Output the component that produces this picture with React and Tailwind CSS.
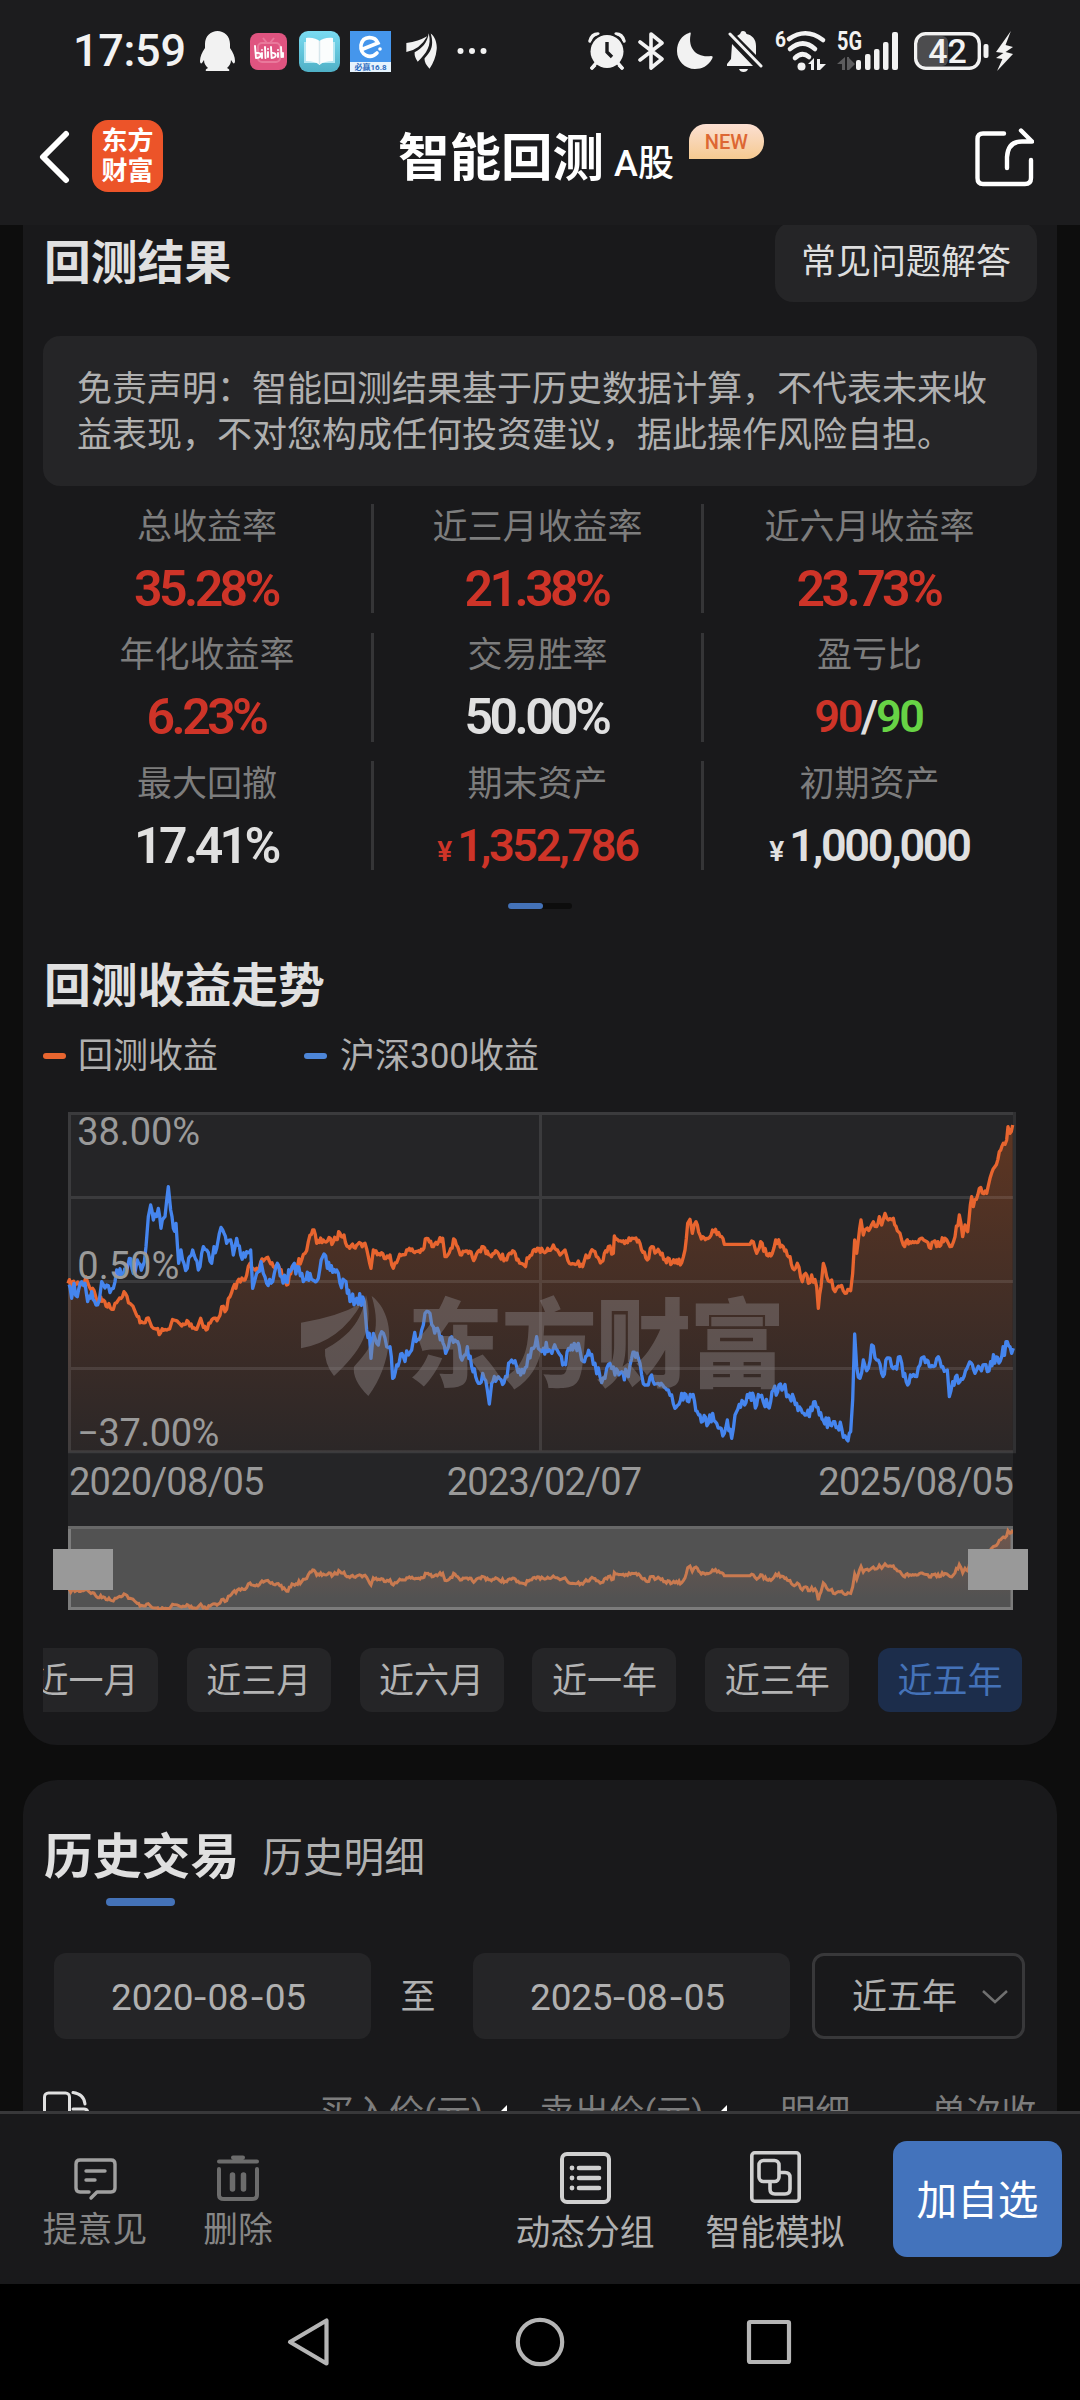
import React from "react";

const STRATEGY = [
  [54,550],[100,550],[108,530],[118,560],[128,565],[140,600],[160,600],[185,628],[195,610],[222,575],[240,610],[262,650],[278,668],[290,655],[305,680],[332,698],[350,690],[372,660],[395,678],[415,665],[440,688],[452,655],[468,690],[485,660],[505,655],[515,620],[525,635],[540,590],[562,545],[585,540],[600,490],[620,505],[640,483],[658,483],[670,500],[685,495],[710,555],[730,500],[755,480],[765,460],[780,405],[792,390],[800,430],[820,420],[850,425],[870,400],[882,405],[895,440],[920,435],[945,430],[955,470],[963,505],[970,450],[990,465],[1020,465],[1030,505],[1045,475],[1070,450],[1090,455],[1118,450],[1130,415],[1150,440],[1178,415],[1185,470],[1215,420],[1235,465],[1255,460],[1275,475],[1300,440],[1320,465],[1345,460],[1370,480],[1388,452],[1400,480],[1422,495],[1445,465],[1475,445],
  [1480,455],[1510,435],[1530,465],[1545,450],[1558,490],[1585,483],[1598,500],[1608,465],[1635,455],[1655,485],[1675,440],[1690,460],[1693,408],[1715,425],[1750,415],[1770,430],[1792,480],[1805,440],[1820,455],[1845,478],[1875,488],[1895,488],[1905,450],[1913,370],[1920,358],[1927,400],[1938,365],[1950,405],[1970,415],[1992,395],[2015,410],[2023,433],[2100,433],[2110,425],[2120,460],[2132,425],[2150,465],[2167,460],[2177,420],[2200,440],[2220,470],[2228,505],[2242,490],[2257,545],[2267,520],[2275,550],[2285,525],[2300,560],[2305,625],[2313,560],[2320,490],[2330,530],[2345,540],[2355,575],[2370,560],[2385,580],[2402,572],[2408,520],[2414,420],[2420,460],[2433,360],[2440,405],[2460,385],[2470,365],[2480,380],[2488,350],[2495,375],[2505,340],[2515,360],[2530,355],[2550,400],[2560,435],[2580,425],[2600,428],[2625,422],[2642,445],[2650,425],[2660,440],[2685,415],[2700,440],[2715,410],[2728,345],[2738,410],[2745,375],[2753,395],[2765,290],[2770,320],[2788,265],[2810,280],[2820,235],[2835,200],[2848,155],[2860,130],[2870,120],[2874,80],[2880,100],[2888,75],
];

const CSI300 = [
  [54,560],[65,595],[72,550],[82,590],[95,545],[105,550],[113,605],[125,575],[138,615],[148,600],[155,545],[170,555],[180,578],[190,565],[200,510],[215,530],[238,475],[250,520],[262,480],[278,500],[288,440],[295,350],[302,315],[310,360],[325,325],[333,385],[345,350],[355,260],[362,330],[370,385],[378,370],[386,490],[393,450],[402,490],[412,505],[428,450],[445,510],[455,460],[470,450],[485,490],[492,440],[500,445],[508,400],[518,390],[530,430],[542,420],[550,465],[560,415],[572,465],[590,455],[602,450],[608,565],[620,520],[633,485],[640,520],[650,550],[668,545],[682,490],[695,530],[708,545],[720,515],[742,500],[760,545],[780,520],[805,535],[822,462],[832,505],[860,510],[870,550],[888,545],[900,605],[920,595],[943,605],[950,690],[958,700],[963,775],[970,700],[985,735],[995,695],[1010,740],[1020,740],[1028,835],[1040,795],[1060,770],[1075,765],[1090,720],[1115,690],[1125,640],[1135,635],[1150,680],[1175,710],[1187,760],[1200,715],[1215,720],[1240,770],[1252,740],[1265,800],[1285,850],[1298,820],[1312,870],[1318,912],[1325,850],[1345,830],[1362,848],[1385,780],[1400,800],[1412,825],[1430,800],[1445,745],[1460,710],[1470,750],
  [1480,745],[1510,745],[1538,795],[1560,750],[1585,730],[1595,780],[1620,765],[1635,790],[1650,830],[1665,835],[1680,790],[1695,825],[1715,815],[1735,830],[1745,775],[1765,775],[1775,825],[1790,855],[1805,825],[1825,850],[1855,870],[1865,885],[1875,925],[1895,880],[1925,890],[1950,945],[1975,970],[1988,940],[2000,970],[2023,1000],[2032,960],[2045,1015],[2055,945],[2080,905],[2100,880],[2120,915],[2130,890],[2145,920],[2162,905],[2170,870],[2200,865],[2215,885],[2240,910],[2278,950],[2295,905],[2308,945],[2340,975],[2350,965],[2375,985],[2390,1018],[2402,995],[2408,900],[2414,702],[2420,800],[2430,835],[2440,780],[2455,805],[2465,735],[2480,780],[2495,820],[2520,775],[2535,800],[2550,770],[2560,830],[2573,855],[2585,830],[2600,830],[2610,795],[2630,780],[2650,800],[2665,770],[2692,810],[2698,890],[2708,845],[2738,838],[2755,795],[2775,820],[2790,805],[2812,815],[2822,785],[2855,770],[2872,725],[2880,740],[2885,760],[2890,745],
];

// Fills the space between two samples with small deterministic daily swings.
function daily(points, amp) {
  const out = [];
  let seed = 7;
  const rnd = () => {
    seed = (seed * 16807) % 2147483647;
    return seed / 2147483647 - 0.5;
  };
  for (let i = 0; i < points.length - 1; i++) {
    const [x0, y0] = points[i];
    const [x1, y1] = points[i + 1];
    out.push([x0, y0]);
    const flat = y0 === y1 && x1 - x0 > 60;
    const n = Math.floor((x1 - x0) / 4);
    for (let k = 1; k < n; k++) {
      const t = k / n;
      out.push([x0 + (x1 - x0) * t, y0 + (y1 - y0) * t + (flat ? 0 : rnd() * amp)]);
    }
  }
  out.push(points[points.length - 1]);
  return out;
}

const line = (pts) => "M" + pts.map((p) => p[0].toFixed(1) + " " + p[1].toFixed(1)).join("L");
const strategyLine = line(daily(STRATEGY, 22));
const indexLine = line(daily(CSI300, 38));
const navPoints = daily(STRATEGY, 28).map(([x, y]) => [(x - 54) / 3, 4 + (y - 75) * 0.1277]);
const navLine = line(navPoints);

const PETALS = [
  "M753 668Q860 652 935 610Q870 725 753 745Z",
  "M825 748C890 712 935 670 948 585C975 690 930 755 852 828Q822 790 825 748Z",
  "M965 588C1008 620 1022 680 1017 725C1011 785 990 840 955 888C922 855 908 825 912 800C962 745 998 700 965 588Z",
];

function StatusBar() {
  return (
    <div className="flex h-[102px] items-center pl-[73px] text-[#f2f2f2]">
      <span className="w-[113px] text-[45px] leading-[60px] font-medium tracking-[-0.300px] whitespace-nowrap">17:59</span>
      <svg className="ml-[14px] h-[40px] w-[35px]" viewBox="0 0 35 40" fill="currentColor">
        <path d="M17.500 0C24 0 30 5 30 13V17C33 21 35 26 35 30C35 32 34 33 33 32L31 29C31 33 29 35 27 37C29 38 30 39 29 40H6C5 39 6 38 8 37C6 35 4 33 4 29L2 32C1 33 0 32 0 30C0 26 2 21 5 17V13C5 5 11 0 17.500 0Z" />
      </svg>
      <svg className="ml-[15px] h-[37px] w-[37px]" viewBox="0 0 37 37">
        <rect width="37" height="37" rx="8" fill="#df5480" />
        <rect x="8" y="10" width="22" height="19" rx="4" fill="none" stroke="#e9799b" strokeWidth="2" />
        <path d="M13 5l4 5M24 5l-4 5" stroke="#e9799b" strokeWidth="2" />
        <g fill="none" stroke="#fff" strokeWidth="1.900" strokeLinecap="round" strokeLinejoin="round">
          <path d="M5 13l1 12c6 0 6-6 1-5M12 20v5M12 17v.1M15 14l.5 11M18 19v5M18 16v.1M21 14l.6 11c6 0 5-6 0-5M28 20v4M28 17v.1M31 14l.5 10M33 20v4" />
        </g>
      </svg>
      <svg className="ml-[12px] h-[41px] w-[41px]" viewBox="0 0 41 41">
        <defs>
          <linearGradient id="book" x1="0" y1="0" x2="0" y2="1">
            <stop offset="0" stopColor="#7adcf2" />
            <stop offset="1" stopColor="#4fb0c6" />
          </linearGradient>
        </defs>
        <rect width="41" height="41" rx="9" fill="url(#book)" />
        <path d="M5 11H36V32H5Z" fill="#b6e8f3" />
        <path d="M7 7C13 6 18 8 20.500 10C23 8 28 6 34 7V30C28 30 24 31 20.500 34C17 31 13 30 7 30Z" fill="#fbfdfd" />
        <path d="M20.500 10V33" stroke="#d7e7ec" strokeWidth="1.500" />
      </svg>
      <svg className="ml-[10px] h-[41px] w-[41px] overflow-visible" viewBox="0 0 41 41">
        <rect width="41" height="41" fill="#4596ec" />
        <rect y="31" width="41" height="10" fill="#e6f3fd" />
        <path d="M13 18L28 12C25 5 13 4 11 14C10 24 20 29 27 22" fill="none" stroke="#fff" strokeWidth="3.600" strokeLinecap="round" />
        <circle cx="30" cy="18" r="1.800" fill="#fff" />
        <text x="20.500" y="39" textAnchor="middle" fontSize="8" fontWeight="700" fill="#2c6bc0">必赢16.8</text>
      </svg>
      <svg className="ml-[15px] h-[36px] w-[31px]" viewBox="750 583 270 308" preserveAspectRatio="none" fill="currentColor">
        {PETALS.map((d) => <path key={d} d={d} />)}
      </svg>
      <svg className="ml-[20px] h-[8px] w-[30px]" viewBox="0 0 30 8" fill="currentColor">
        <circle cx="3.500" cy="4" r="3" /><circle cx="15" cy="4" r="3" /><circle cx="26.500" cy="4" r="3" />
      </svg>

      <svg className="ml-[101px] h-[38px] w-[38px]" viewBox="0 0 38 38">
        <g fill="none" stroke="currentColor" strokeWidth="3.400" strokeLinecap="round">
          <path d="M2 9C3 5 6 2 10 2M28 2C32 2 35 5 36 9M8 32L4 36M30 32L34 36" />
        </g>
        <circle cx="19" cy="19" r="18.300" fill="#1c1c1e" />
        <circle cx="19" cy="19.500" r="16.500" fill="currentColor" />
        <path d="M8 31L4 36M30 31L34 36" stroke="currentColor" strokeWidth="3.400" strokeLinecap="round" />
        <path d="M19 10V20L24 25" fill="none" stroke="#1c1c1e" strokeWidth="3.400" />
      </svg>
      <svg className="ml-[12px] h-[40px] w-[26px]" viewBox="0 0 26 40" fill="none" stroke="currentColor" strokeWidth="3.600" strokeLinejoin="round" strokeLinecap="round">
        <path d="M2 11L24 28L13 37V3L24 12L2 29" />
      </svg>
      <svg className="ml-[13px] h-[38px] w-[36px]" viewBox="0 0 36 38" fill="currentColor">
        <path d="M12 1C14 0 14 1 13.500 3C11 16 19 26 34 24C36 24 36 25 35 27C31 34 25 37 18 37C8 37 0 29 0 19C0 10 5 3 12 1Z" />
      </svg>
      <svg className="ml-[14px] h-[42px] w-[36px]" viewBox="0 0 36 42" fill="currentColor">
        <path d="M16 1C18 1 19 2 19.500 4C25 5 29 9 29 16V25L10 6L13 4C14 2 14 1 16 1ZM5 14L26 36H0V34L4 29Z" />
        <path d="M3 4L34 36" stroke="#1c1c1e" strokeWidth="7" />
        <path d="M3 4L34 36" stroke="currentColor" strokeWidth="3" strokeLinecap="round" />
        <path d="M12 39H21Q20 42 16.500 42T12 39Z" />
      </svg>
      <svg className="ml-[12px] h-[42px] w-[51px] overflow-visible" viewBox="0 0 51 42">
        <text x="0" y="17" fontSize="22" fontWeight="700" fill="currentColor" textLength="11" lengthAdjust="spacingAndGlyphs">6</text>
        <g fill="none" stroke="currentColor" strokeWidth="4.600" strokeLinecap="round">
          <path d="M14 9Q31 -3 48 10M15 19Q28 8 40 19M20 28Q27 21 34 27" />
        </g>
        <circle cx="26.500" cy="36.500" r="4" fill="currentColor" />
        <path d="M33 34L39 28V40H36V34ZM42 29H45V34H51L45 40H42Z" fill="currentColor" />
      </svg>
      <svg className="ml-[11px] h-[42px] w-[63px] overflow-visible" viewBox="0 0 63 42" fill="currentColor">
        <text x="0" y="20" fontSize="26" fontWeight="700" textLength="25" lengthAdjust="spacingAndGlyphs">5G</text>
        <path d="M0 34L8 27V40H5V34ZM10 27H12V28L18 34L12 40H10Z" fill="#5c5c5e" />
        <rect x="19" y="30" width="5" height="10" rx="2" />
        <rect x="28" y="24" width="5.500" height="16" rx="2" />
        <rect x="37" y="19" width="5.500" height="21" rx="2" />
        <rect x="46" y="12" width="5.500" height="28" rx="2" />
        <rect x="55" y="2" width="6" height="38" rx="2" />
      </svg>
      <svg className="ml-[14px] h-[38px] w-[76px] overflow-visible" viewBox="0 0 76 38">
        <rect x="4" y="4" width="30" height="30" rx="6" fill="#4c4c4e" />
        <rect x="1.700" y="1.700" width="63.600" height="34.600" rx="10" fill="none" stroke="currentColor" strokeWidth="3.400" />
        <rect x="69.500" y="12" width="5" height="14" rx="2" fill="currentColor" />
        <text x="33.500" y="31" textAnchor="middle" fontSize="34" fontWeight="500" fill="currentColor">42</text>
      </svg>
      <svg className="ml-[6px] h-[40px] w-[17px]" viewBox="0 0 16 40" preserveAspectRatio="none" fill="currentColor">
        <path d="M14 0L0 21L7 22L0 27L6 28L1 40L16 23L9 21L16 16L9 14Z" />
      </svg>
    </div>
  );
}

function Header() {
  return (
    <header className="h-[225px] shrink-0 bg-[#1c1c1e]">
      <StatusBar />
      <div className="flex h-[123px] items-start text-white">
        <svg className="mt-[28px] ml-[38px] h-[54px] w-[32px]" viewBox="0 0 32 54" fill="none" stroke="currentColor" strokeWidth="6" strokeLinecap="round" strokeLinejoin="round">
          <path d="M28 4L5 27L28 50" />
        </svg>
        <div className="mt-[18px] ml-[22px] flex h-[72px] w-[71px] flex-col items-center justify-center rounded-[16px] bg-[#ec5429] text-[26px] leading-[30px] font-bold">
          <span>东方</span>
          <span>财富</span>
        </div>
        <div className="mt-[22px] ml-[235px] flex w-[368px]">
          <h1 className="text-[51.500px] leading-[70px] font-bold whitespace-nowrap">智能回测</h1>
          <span className="mt-[15px] ml-[10px] text-[36px] leading-[50px] font-medium whitespace-nowrap">A股</span>
          <span className="ml-[15px] flex h-[35px] w-[75px] items-center justify-center rounded-[17px] rounded-bl-none bg-linear-to-b from-[#fbdfd2] to-[#f6ca90] text-[20px] font-medium text-[#dd6733]">NEW</span>
        </div>
        <svg className="mt-[25px] ml-[208px] h-[60px] w-[60px]" viewBox="0 0 60 60" fill="none" stroke="currentColor" strokeWidth="4.400" strokeLinecap="round" strokeLinejoin="round">
          <path d="M30 6.500H9Q3.500 6.500 3.500 12V51Q3.500 57 9 57H51Q57 57 57 51V33" />
          <path d="M33 41V30Q34 14.500 48 14.500H58L47 3.500" />
        </svg>
      </div>
    </header>
  );
}

function Percent({ children, tone = "text-[#ce3428]" }) {
  return <span className={"mr-[2px] text-[50px] tracking-[-3.600px] " + tone}>{children}</span>;
}

function Money({ children, tone }) {
  return (
    <span className={"flex items-baseline text-[45px] tracking-[-2.300px] " + tone}>
      <span className="mr-[5px] text-[28px] tracking-normal">¥</span>
      {children}
    </span>
  );
}

const LIGHT = "text-[#e0e0e0]";
const RED = "text-[#ce3428]";

const STATS = [
  ["总收益率", <Percent>35.28%</Percent>],
  ["近三月收益率", <Percent>21.38%</Percent>],
  ["近六月收益率", <Percent>23.73%</Percent>],
  ["年化收益率", <Percent>6.23%</Percent>],
  ["交易胜率", <Percent tone={LIGHT}>50.00%</Percent>],
  ["盈亏比", <span className="mr-[2px] text-[45px] tracking-[-2.300px] text-[#e0e0e0]"><span className={RED}>90</span>/<span className="text-[#67d345]">90</span></span>],
  ["最大回撤", <Percent tone={LIGHT}>17.41%</Percent>],
  ["期末资产", <Money tone={RED}>1,352,786</Money>],
  ["初期资产", <Money tone={LIGHT}>1,000,000</Money>],
];

function Stats() {
  return (
    <div className="mt-[18px] grid grid-cols-[331px_330px_331px] gap-y-[19.500px]">
      {STATS.map(([label, value], i) => (
        <div key={label} className={"flex h-[109px] flex-col items-center " + (i % 3 < 2 ? "border-r-[3px] border-[#353537]" : "")}>
          <span className="mt-[1.500px] h-[44px] text-[35px] leading-[44px] whitespace-nowrap text-[#7d7d7d]">{label}</span>
          <span className="mt-[11px] leading-[56px] font-semibold whitespace-nowrap">{value}</span>
        </div>
      ))}
    </div>
  );
}

function TrendChart() {
  return (
    <div className="mt-[30px] ml-[25px] w-[948px]">
      <svg className="block h-[341px] w-[948px] overflow-visible" viewBox="54 36 2844 1023">
        <defs>
          <linearGradient id="area" gradientUnits="userSpaceOnUse" x1="0" y1="75" x2="0" y2="1055">
            <stop offset="0" stopColor="#fa6414" stopOpacity="0.270" />
            <stop offset="0.500" stopColor="#f5641e" stopOpacity="0.150" />
            <stop offset="1" stopColor="#f2642b" stopOpacity="0.030" />
          </linearGradient>
        </defs>
        <rect x="54" y="36" width="2835" height="1023" fill="#252527" />
        <path d={strategyLine + "V1055H54Z"} fill="url(#area)" />
        <g stroke="#fff" strokeOpacity="0.100" strokeWidth="9">
          <path d="M54 40.500H2898M54 292.500H2889M54 544.500H2889M54 805.500H2889M54 1055H2898M58.500 36V1055M1471.500 45V1052M2893.500 45V1052" />
        </g>
        <path d={strategyLine} fill="none" stroke="#e8652f" strokeWidth="10" strokeLinejoin="round" />
        <path d={indexLine} fill="none" stroke="#4585ee" strokeWidth="10" strokeLinejoin="round" />
        <g fill="#8a8286" fillOpacity="0.450">
          {PETALS.map((d) => <path key={d} d={d} />)}
          <text x="1072" y="838" fontSize="288" fontWeight="900" textLength="1134">东方财富</text>
        </g>
        <g fill="#9a9a9a" fontSize="114">
          <text x="82" y="134" textLength="368">38.00%</text>
          <text x="82" y="537" textLength="306">0.50%</text>
          <text x="82" y="1037" textLength="426">−37.00%</text>
        </g>
      </svg>
      <div className="flex h-[73px] w-[945px] items-start justify-between bg-[#252527] pt-[5px] pl-[1px] text-[38px] leading-[48px] tracking-[-0.750px] text-[#9a9a9a]">
        <span>2020/08/05</span>
        <span className="mr-[-12px] ml-[-6px]">2023/02/07</span>
        <span>2025/08/05</span>
      </div>
      <div className="relative h-[84px] w-[945px]">
        <svg className="block h-[84px] w-[945px]" viewBox="0 0 945 84">
          <defs>
            <linearGradient id="navArea" x1="0" y1="0" x2="0" y2="1">
              <stop offset="0" stopColor="#e86a3a" stopOpacity="0.200" />
              <stop offset="0.850" stopColor="#e86a3a" stopOpacity="0" />
            </linearGradient>
          </defs>
          <rect width="945" height="84" fill="#525252" />
          <path d={navLine + "V84H0Z"} fill="url(#navArea)" />
          <path d="M0 1.500H945" stroke="#686868" strokeWidth="3" />
          <path d="M1.500 3V82.500H944V3" fill="none" stroke="#7c7c7c" strokeWidth="3" />
          <path d={navLine} fill="none" stroke="#c97a50" strokeWidth="3" />
        </svg>
        <div className="absolute top-[23px] -left-[15px] h-[41px] w-[60px] bg-[#999]" />
        <div className="absolute top-[23px] -right-[15px] h-[41px] w-[60px] bg-[#999]" />
      </div>
    </div>
  );
}

const RANGES = ["近一月", "近三月", "近六月", "近一年", "近三年", "近五年"];

function ResultCard() {
  return (
    <section className="mx-[23px] h-[1520px] overflow-hidden rounded-b-[34px] bg-[#19191b] px-[20px]">
      <div className="-mt-[3px] flex h-[80px] items-center justify-between">
        <h2 className="mt-[2px] ml-[1px] text-[46.800px] leading-[60px] font-bold text-[#e0e0e0]">回测结果</h2>
        <button className="h-[80px] w-[262px] rounded-[18px] bg-[#252527] pt-[2px] text-[35px] text-[#dedede]">常见问题解答</button>
      </div>
      <div className="mt-[34px] h-[150px] rounded-[17px] bg-[#252527] pt-[30.500px] pl-[34px] text-[35px] leading-[46.500px] whitespace-nowrap text-[#b0b0b0]">
        免责声明：智能回测结果基于历史数据计算，不代表未来收<br />
        益表现，不对您构成任何投资建议，据此操作风险自担。
      </div>
      <Stats />
      <div className="mt-[33px] ml-[465px] flex h-[6px] w-[64px] rounded-full bg-[#0d0d0d]">
        <div className="w-[35px] rounded-full bg-[#4472b8]" />
      </div>
      <h2 className="mt-[47px] ml-[1px] text-[46.800px] leading-[60px] font-bold text-[#e0e0e0]">回测收益走势</h2>
      <div className="mt-[16px] flex h-[50px] items-center text-[35px] text-[#b0b0b0]">
        <i className="-mt-[2px] h-[6px] w-[23px] rounded-[3px] bg-[#e8652f]" />
        <span className="ml-[12px] w-[226px]">回测收益</span>
        <i className="-mt-[2px] h-[6px] w-[23px] rounded-[3px] bg-[#4d86d8]" />
        <span className="ml-[13px]">沪深300收益</span>
      </div>
      <TrendChart />
      <div className="mt-[38px] flex w-[994px] justify-end gap-[28.800px] overflow-hidden pr-[15px]">
        {RANGES.map((r) => (
          <button
            key={r}
            className={"h-[64px] w-[144px] shrink-0 rounded-[12px] pt-[4px] text-[35px] " + (r === "近五年" ? "bg-[#1c2d4b] text-[#4472b8]" : "bg-[#252527] text-[#b3b3b3]")}
          >
            {r}
          </button>
        ))}
      </div>
    </section>
  );
}

function HistoryCard() {
  return (
    <section className="mx-[23px] mt-[35px] flex-1 overflow-hidden rounded-t-[34px] bg-[#19191b] px-[20px]">
      <div className="mt-[46px] flex items-center">
        <h2 className="ml-px text-[48.800px] leading-[64px] font-bold text-[#e0e0e0]">历史交易</h2>
        <span className="ml-[23px] text-[40.700px] leading-[62px] text-[#b0b0b0]">历史明细</span>
      </div>
      <div className="mt-[8px] ml-[63px] h-[8px] w-[69px] rounded-[4px] bg-[#4472b8]" />
      <div className="mt-[47px] ml-[11px] flex h-[86px] items-center text-[37px] text-[#b0b0b0]">
        <div className="h-[86px] w-[317px] rounded-[12px] bg-[#252527] pr-[8px] text-center leading-[89px] tracking-[-0.200px]">2020<span className="mx-[2px] inline-block scale-x-120">-</span>08<span className="mx-[3px] inline-block scale-x-120">-</span>05</div>
        <span className="w-[102px] pt-[5px] pr-[8px] text-center text-[35px]">至</span>
        <div className="h-[86px] w-[317px] rounded-[12px] bg-[#252527] pr-[8px] text-center leading-[89px] tracking-[-0.200px]">2025<span className="mx-[2px] inline-block scale-x-120">-</span>08<span className="mx-[3px] inline-block scale-x-120">-</span>05</div>
        <div className="ml-[22px] flex h-[86px] w-[213px] items-center rounded-[12px] border-[3px] border-[#38383a] pl-[37px] text-[35px]">
          <span className="pt-[4px]">近五年</span>
          <svg className="ml-[24px] h-[16px] w-[28px]" viewBox="0 0 28 16" fill="none" stroke="#707070" strokeWidth="2.500">
            <path d="M2 3L14 14L26 3" />
          </svg>
        </div>
      </div>
      <div className="mt-[50px] flex w-[1010px] text-[35px] leading-[50px] whitespace-nowrap text-[#7d7d7d]">
        <svg className="mt-[2px] h-[46px] w-[46px]" viewBox="0 0 46 46" fill="none" stroke="#e0e0e0" strokeWidth="3" strokeLinecap="round">
          <rect x="1.500" y="2" width="25" height="40" rx="4" />
          <path d="M30 1.500Q41 3 42 13M30 18H41Q45 18 45 23V38Q45 42 41 42H28" />
        </svg>
        <span className="ml-[230px]">买入价(元)</span>
        <svg className="mt-[16px] ml-[16px] h-[18px] w-[10px]" viewBox="0 0 10 18" fill="#fff"><path d="M8 0V18H-10Z" /></svg>
        <span className="ml-[30px]">卖出价(元)</span>
        <svg className="mt-[16px] ml-[16px] h-[18px] w-[10px]" viewBox="0 0 10 18" fill="#fff"><path d="M8 0V18H-10Z" /></svg>
        <span className="ml-[51px]">明细</span>
        <span className="ml-[81px]">单次收</span>
      </div>
    </section>
  );
}

function BottomBar() {
  return (
    <footer className="flex h-[173px] shrink-0 border-t-[3px] border-[#38383a] bg-[#19191b] text-[34.800px] leading-[44px] whitespace-nowrap">
      <div className="mt-[40px] ml-[43px] flex w-[104px] flex-col items-center text-[#868686]">
        <svg className="mt-[3px] h-[44px] w-[45px]" viewBox="0 0 45 44" fill="none" stroke="#a0a0a0" strokeWidth="3.400" strokeLinecap="round" strokeLinejoin="round">
          <path d="M16 35H7Q3 35 3 31V7Q3 3 7 3H38Q42 3 42 7V31Q42 35 38 35H24L18 41" />
          <path d="M13 14H32M13 23H22" />
        </svg>
        <span className="mt-[7px]">提意见</span>
      </div>
      <div className="mt-[40px] ml-[54px] flex w-[74px] flex-col items-center text-[#868686]">
        <svg className="h-[48px] w-[44px]" viewBox="0 0 44 48" fill="none" stroke="#6c6c6c" strokeWidth="4" strokeLinecap="round">
          <path d="M3 7.500H41M17 3.500H27" />
          <path d="M3 15V41Q3 45 8 45H36Q41 45 41 41V15" />
          <path d="M16.500 21V35M27.500 21V35" strokeWidth="5.500" />
        </svg>
        <span className="mt-[6px]">删除</span>
      </div>
      <div className="mt-[38px] ml-[240px] flex w-[140px] flex-col items-center text-[#b0b0b0]">
        <svg className="h-[52px] w-[51px]" viewBox="0 0 51 52" fill="none" stroke="#d0d0d0" strokeWidth="4" strokeLinecap="round">
          <rect x="2" y="2" width="47" height="48" rx="5" />
          <path d="M19 16H39M19 26H39M19 36H39" strokeWidth="4.600" />
          <path d="M12 16V16.010M12 26V26.010M12 36V36.010" strokeWidth="4.800" />
        </svg>
        <span className="mt-[7px]">动态分组</span>
      </div>
      <div className="mt-[37px] ml-[50px] flex w-[140px] flex-col items-center text-[#b0b0b0]">
        <svg className="h-[52px] w-[51px]" viewBox="0 0 51 52" fill="none" stroke="#d0d0d0" strokeWidth="3.600">
          <rect x="1.800" y="1.800" width="47.400" height="48.400" rx="3" />
          <rect x="9" y="9.500" width="20" height="21" rx="4.500" />
          <path d="M30 21.500H35Q40 21.500 40 26.500V38Q40 43 35 43H25Q20 43 20 38V31" />
        </svg>
        <span className="mt-[8px]">智能模拟</span>
      </div>
      <button className="mt-[27px] ml-[48px] h-[116px] w-[169px] rounded-[14px] bg-[#4373bc] pt-[3px] text-[40.700px] text-white">加自选</button>
    </footer>
  );
}

function NavBar() {
  return (
    <nav className="flex h-[116px] shrink-0 items-center bg-black">
      <svg className="ml-[286px] h-[50px] w-[46px]" viewBox="0 0 46 50" fill="none" stroke="#b5b5b5" strokeWidth="4.200" strokeLinejoin="round">
        <path d="M40.500 3.500V46.500L4 25Z" />
      </svg>
      <svg className="ml-[183px] h-[50px] w-[50px]" viewBox="0 0 50 50" fill="none" stroke="#b5b5b5" strokeWidth="4.200">
        <circle cx="25" cy="25" r="22.200" />
      </svg>
      <svg className="ml-[181px] h-[46px] w-[46px]" viewBox="0 0 46 46" fill="none" stroke="#b5b5b5" strokeWidth="4.200" strokeLinejoin="round">
        <rect x="3" y="3" width="40" height="40" rx="1" />
      </svg>
    </nav>
  );
}

export default function App() {
  return (
    <div className="flex h-[2400px] w-[1080px] flex-col overflow-hidden bg-[#0d0d0d] font-['Roboto','Noto_Sans_CJK_SC',sans-serif]">
      <Header />
      <main className="flex min-h-0 flex-1 flex-col overflow-hidden">
        <ResultCard />
        <HistoryCard />
      </main>
      <BottomBar />
      <NavBar />
    </div>
  );
}
